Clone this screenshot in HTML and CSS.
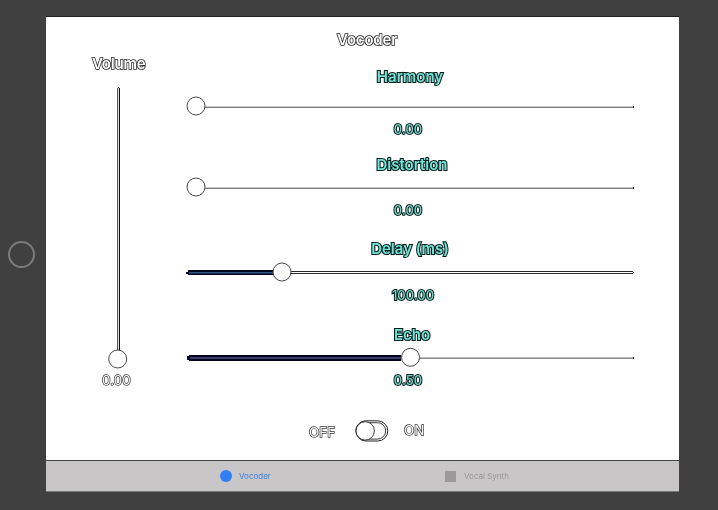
FILE: index.html
```html
<!DOCTYPE html>
<html lang="en">
<head>
<meta charset="utf-8">
<title>Vocoder</title>
<link rel="stylesheet" href="styles.css">
</head>
<body>
<div class="device">
  <div class="bezel"><span class="home"></span></div>
  <div class="screen">
    <main class="content">
      <section class="volume">
        <h2 class="plain volume-title">Volume</h2>
        <svg class="vslider" width="20" height="284" viewBox="0 0 20 284" shape-rendering="crispEdges">
          <path d="M9 1h1v262h-1z" fill="#555"/><path d="M10 1h1v262h-1z" fill="#ddd"/><path d="M11 1h1v262h-1z" fill="#111"/><path d="M10 0h1v1h-1z" fill="#111"/>
          <circle cx="9.7" cy="272" r="9" class="knob"/>
        </svg>
        <div class="thin volume-value">0.00</div>
      </section>
      <section class="controls">
        <h1 class="plain title">Vocoder</h1>
        <div class="group first">
          <h2 class="teal harmony">Harmony</h2>
          <svg class="slider" width="449" height="20" shape-rendering="crispEdges"><path d="M19 10h428v1h-428z" fill="#ccc"/><path d="M19 11h428v1h-428z" fill="#7c7c7c"/><path d="M447 10h1v2h-1z" fill="#111"/><circle cx="10" cy="10" r="9" class="knob"/></svg>
          <div class="value">0.00</div>
        </div>
        <div class="group second">
          <h2 class="teal distortion">Distortion</h2>
          <svg class="slider" width="449" height="20" shape-rendering="crispEdges"><path d="M19 10h428v1h-428z" fill="#ccc"/><path d="M19 11h428v1h-428z" fill="#7c7c7c"/><path d="M447 10h1v2h-1z" fill="#111"/><circle cx="10" cy="10" r="9" class="knob"/></svg>
          <div class="value">0.00</div>
        </div>
        <div class="group third">
          <h2 class="teal delay">Delay (ms)</h2>
          <svg class="slider" width="449" height="20" shape-rendering="crispEdges"><path d="M96 9h351v1h-351zM96 11h351v1h-351zM447 10h1v1h-1z" fill="#2b2b2b"/><path d="M2 8h90v5H2v-1H0v-2h2z" fill="#02071f"/><path d="M3 10h89v1H3z" fill="#355481"/><path d="M3 11h89v1H3z" fill="#14294f"/><circle cx="96" cy="10" r="9" class="knob"/></svg>
          <div class="value wide">100.00</div>
        </div>
        <div class="group fourth">
          <h2 class="teal echo">Echo</h2>
          <svg class="slider" width="449" height="20" shape-rendering="crispEdges"><path d="M230 10h217v1h-217z" fill="#bbb"/><path d="M230 11h217v1h-217z" fill="#8c8c8c"/><path d="M447 10h1v2h-1z" fill="#111"/><path d="M3 8h212v6H3v-1H1v-4h2z" fill="#02051c"/><path d="M4 10h211v2H4z" fill="#383f70"/><circle cx="224.5" cy="10.3" r="9" class="knob"/></svg>
          <div class="value">0.50</div>
        </div>
        <div class="toggle">
          <span class="thin off">OFF</span>
          <svg class="switch" width="34" height="22" viewBox="0 0 34 22" fill="none" stroke="#222">
            <rect x=".8" y=".8" width="32" height="20.2" rx="10.1"/>
            <path d="M12 2.7h10.5a8.2 8.2 0 0 1 0 16.4H12" stroke-width=".9"/>
            <circle cx="10.2" cy="10.9" r="9.2" fill="#fff" stroke-width=".9"/>
          </svg>
          <span class="thin on">ON</span>
        </div>
      </section>
    </main>
    <nav class="tabs">
      <a class="tab active"><span class="dot"></span>Vocoder</a>
      <a class="tab"><span class="square"></span>Vocal Synth</a>
    </nav>
  </div>
</div>
</body>
</html>
```
FILE: styles.css
```css
* { box-sizing: border-box; }
body { margin: 0; font-family: Inter, "Liberation Sans", sans-serif; background: #404040; }
.device { width: 718px; height: 510px; display: flex; padding: 16px 39px 18px 0; overflow: hidden; }
.bezel { width: 46px; padding: 225px 0 0 8px; }
.home { display: block; width: 27px; height: 27px; border: 2px solid #7c7c7c; border-radius: 50%; }
.screen { width: 633px; height: 476px; background: #fff; border-top: 1px solid #222; display: flex; flex-direction: column; }
.content { height: 443px; display: flex; }
.volume { width: 140px; display: flex; flex-direction: column; align-items: center; padding-top: 37px; }
.controls { width: 449px; }
h1, h2 { margin: 0; }
.plain, .thin, .teal, .value { line-height: 20px; height: 20px; white-space: nowrap; text-align: center; paint-order: stroke fill; will-change: transform; }
.plain { font-size: 15px; font-weight: 600; letter-spacing: -.2px; color: #fff; -webkit-text-stroke: 1.5px #222; }
.volume-title { margin-left: 6px; }
.vslider { display: block; margin: 13px 0 0 4px; height: 284px; flex: none; }
.thin { font-size: 13.5px; color: #fff; -webkit-text-stroke: 1.4px #333; }
.volume-value { margin: -1px 0 0 1px; }
.title { margin: 13px 87px 0 0; }
.group { display: flex; flex-direction: column; gap: 3px; }
.first { margin-top: 17px; }
.first .teal { margin-bottom: 6px; }
.second { margin-top: 16px; gap: 2px; }
.second .value { margin-top: 1px; }
.third { margin-top: 19px; }
.fourth { margin-top: 20px; gap: 2px; }
.fourth .value { margin-top: 1px; }
.teal { font-size: 15px; font-weight: 600; color: #76e2d6; -webkit-text-stroke: 2.2px #06201e; margin-right: 1px; }
.echo { margin-right: 0; }
.distortion { padding-left: 4px; }
.echo { padding-left: 3px; }
.value { font-size: 13px; font-weight: 500; color: #78cfc5; -webkit-text-stroke: 2px #06201e; margin-right: 5px; }
.wide { margin-left: 10px; }
.slider { display: block; overflow: visible; }
.knob { fill: #fff; stroke: #333; stroke-width: .9; shape-rendering: auto; }
.toggle { display: flex; margin: 30px 0 0 123px; height: 24px; }
.off { margin-top: 2px; width: 26px; }
.switch { margin: 0 0 0 20px; flex: none; }
.on { margin: 0 0 0 15px; }
.tabs { height: 32px; flex: none; background: #c8c6c7; border-top: 1px solid #444; border-bottom: 1px solid #777; display: flex; padding: 0 0 0 174px; }
.tab { display: flex; align-items: center; width: 225px; font-size: 8px; color: #999; will-change: transform; }
.active { color: #3a7fe0; }
.dot { width: 12px; height: 12px; border-radius: 50%; background: #2f80f5; margin-right: 7px; }
.square { width: 11px; height: 11px; background: #999; margin-right: 8px; }
```
